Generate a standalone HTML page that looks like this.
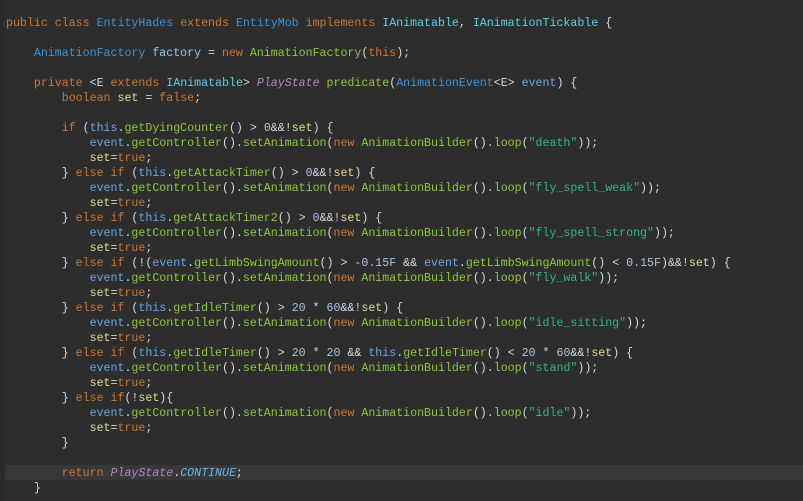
<!DOCTYPE html>
<html><head><meta charset="utf-8"><style>
html,body{margin:0;padding:0;background:#2d2d2d;width:803px;height:501px;overflow:hidden}
#code{position:absolute;left:6px;top:1px;font-family:"Liberation Mono",monospace;font-size:11.62px;line-height:15px;white-space:pre;color:#d8d8d8}
.hl{position:absolute;left:5px;right:0;top:465px;height:15px;background:#383838}
.g{position:absolute;left:0;top:0;width:4px;height:501px;background:#2a2a2a}
.k{color:#cc7832}.t{color:#3d93d6}.i{color:#5fd0e8}.f{color:#8ec8f0}.m{color:#8fc93a}.v{color:#6aa6e6}.s{color:#e8dc96}.st{color:#33b58e}.n{color:#a8c4e6}.p{color:#b487c9;font-style:italic}.c{color:#6ab8f0;font-style:italic}.th{color:#6aa6e6}
</style></head><body>
<div class="g"></div>
<div class="hl"></div>
<div id="code">
<span class="k">public class</span> <span class="t">EntityHades</span> <span class="k">extends</span> <span class="t">EntityMob</span> <span class="k">implements</span> <span class="i">IAnimatable</span>, <span class="i">IAnimationTickable</span> {

    <span class="t">AnimationFactory</span> <span class="f">factory</span> = <span class="k">new</span> <span class="m">AnimationFactory</span>(<span class="k">this</span>);

    <span class="k">private</span> &lt;E <span class="k">extends</span> <span class="i">IAnimatable</span>&gt; <span class="p">PlayState</span> <span class="m">predicate</span>(<span class="t">AnimationEvent</span>&lt;E&gt; <span class="v">event</span>) {
        <span class="k">boolean</span> <span class="s">set</span> = <span class="k">false</span>;

        <span class="k">if</span> (<span class="th">this</span>.<span class="m">getDyingCounter</span>() &gt; <span class="n">0</span>&amp;&amp;!<span class="s">set</span>) {
            <span class="v">event</span>.<span class="m">getController</span>().<span class="m">setAnimation</span>(<span class="k">new</span> <span class="m">AnimationBuilder</span>().<span class="m">loop</span>(<span class="st">"death"</span>));
            <span class="s">set</span>=<span class="k">true</span>;
        } <span class="k">else if</span> (<span class="th">this</span>.<span class="m">getAttackTimer</span>() &gt; <span class="n">0</span>&amp;&amp;!<span class="s">set</span>) {
            <span class="v">event</span>.<span class="m">getController</span>().<span class="m">setAnimation</span>(<span class="k">new</span> <span class="m">AnimationBuilder</span>().<span class="m">loop</span>(<span class="st">"fly_spell_weak"</span>));
            <span class="s">set</span>=<span class="k">true</span>;
        } <span class="k">else if</span> (<span class="th">this</span>.<span class="m">getAttackTimer2</span>() &gt; <span class="n">0</span>&amp;&amp;!<span class="s">set</span>) {
            <span class="v">event</span>.<span class="m">getController</span>().<span class="m">setAnimation</span>(<span class="k">new</span> <span class="m">AnimationBuilder</span>().<span class="m">loop</span>(<span class="st">"fly_spell_strong"</span>));
            <span class="s">set</span>=<span class="k">true</span>;
        } <span class="k">else if</span> (!(<span class="v">event</span>.<span class="m">getLimbSwingAmount</span>() &gt; -<span class="n">0.15F</span> &amp;&amp; <span class="v">event</span>.<span class="m">getLimbSwingAmount</span>() &lt; <span class="n">0.15F</span>)&amp;&amp;!<span class="s">set</span>) {
            <span class="v">event</span>.<span class="m">getController</span>().<span class="m">setAnimation</span>(<span class="k">new</span> <span class="m">AnimationBuilder</span>().<span class="m">loop</span>(<span class="st">"fly_walk"</span>));
            <span class="s">set</span>=<span class="k">true</span>;
        } <span class="k">else if</span> (<span class="th">this</span>.<span class="m">getIdleTimer</span>() &gt; <span class="n">20</span> * <span class="n">60</span>&amp;&amp;!<span class="s">set</span>) {
            <span class="v">event</span>.<span class="m">getController</span>().<span class="m">setAnimation</span>(<span class="k">new</span> <span class="m">AnimationBuilder</span>().<span class="m">loop</span>(<span class="st">"idle_sitting"</span>));
            <span class="s">set</span>=<span class="k">true</span>;
        } <span class="k">else if</span> (<span class="th">this</span>.<span class="m">getIdleTimer</span>() &gt; <span class="n">20</span> * <span class="n">20</span> &amp;&amp; <span class="th">this</span>.<span class="m">getIdleTimer</span>() &lt; <span class="n">20</span> * <span class="n">60</span>&amp;&amp;!<span class="s">set</span>) {
            <span class="v">event</span>.<span class="m">getController</span>().<span class="m">setAnimation</span>(<span class="k">new</span> <span class="m">AnimationBuilder</span>().<span class="m">loop</span>(<span class="st">"stand"</span>));
            <span class="s">set</span>=<span class="k">true</span>;
        } <span class="k">else if</span>(!<span class="s">set</span>){
            <span class="v">event</span>.<span class="m">getController</span>().<span class="m">setAnimation</span>(<span class="k">new</span> <span class="m">AnimationBuilder</span>().<span class="m">loop</span>(<span class="st">"idle"</span>));
            <span class="s">set</span>=<span class="k">true</span>;
        }

        <span class="k">return</span> <span class="p">PlayState</span>.<span class="c">CONTINUE</span>;
    }
</div>
</body></html>
